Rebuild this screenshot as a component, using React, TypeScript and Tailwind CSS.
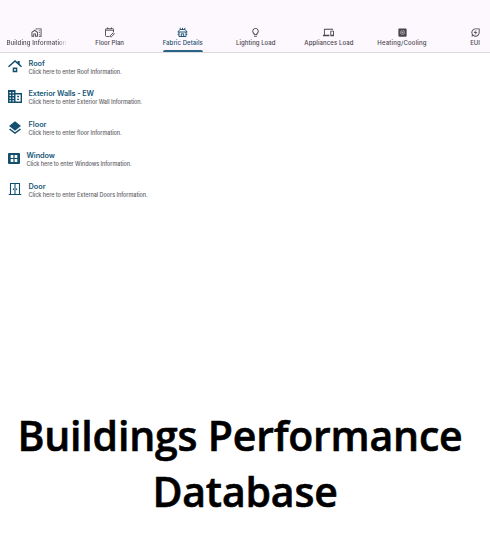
import type { ReactNode } from "react";
import {
  MdOutlineHomeWork,
  MdOutlineLightbulb,
  MdOutlineDevices,
  MdHeatPump,
  MdOutlineEnergySavingsLeaf,
  MdLayers,
} from "react-icons/md";

function FloorPlanIcon() {
  return (
    <svg viewBox="0 0 11 11" className="size-[11px]" fill="none" stroke="currentColor" strokeWidth="0.9">
      <path d="M5.5 9.5H2.5Q1.5 9.5 1.5 8.5V2.5Q1.5 1.7 2.5 1.7H8.5Q9.5 1.7 9.5 2.5V5M1.5 3.2H9.5M3.5 0.5V2M7.5 0.5V2M6.3 9.8V8.6L9.3 5.8L10.3 6.8L7.4 9.8Z" />
    </svg>
  );
}

function FabricIcon() {
  return (
    <svg viewBox="0 0 11 11" className="size-[11px]" fill="none" stroke="currentColor" strokeWidth="0.95">
      <path d="M0.7 5.2L3 2.5H8L10.3 5.2M1 5H10M2 5V9.5H9V5M3.2 0.8V2.5M7.8 0.8V2.5M5.5 0.8V2.5M0.6 7.3H2M9 7.3H10.4M4.3 9.5V6.8H6.7V9.5" />
    </svg>
  );
}

function RoofIcon() {
  return (
    <svg viewBox="0 0 14 13" className="h-[13px] w-3.5" fill="currentColor">
      <path
        fillRule="evenodd"
        d="M7 0L9.6 2.3V0.9H11.7V4.1L14 6.2L13 7.2L7 2L1 7.2L0 6.2ZM4.7 7.5H9.3V12.3H4.7ZM6.2 9V10.8H7.8V9Z"
      />
    </svg>
  );
}

function BuildingIcon() {
  return (
    <svg viewBox="0 0 14 13" className="h-[13px] w-3.5" fill="currentColor">
      <path
        fillRule="evenodd"
        d="M0 0H7.5V3H14V13H0ZM1.5 2V3.2H3V2ZM4.5 2V3.2H6V2ZM1.5 4.8V6H3V4.8ZM4.5 4.8V6H6V4.8ZM1.5 7.5V8.7H3V7.5ZM4.5 7.5V8.7H6V7.5ZM1.5 10.2V11.4H3V10.2ZM4.5 10.2V11.4H6V10.2ZM7.5 4.4V11.6H12.6V4.4Z"
      />
      <path d="M9.2 5.8H11V7.2H9.2ZM9.2 8.7H11V10.1H9.2Z" />
    </svg>
  );
}

function WindowIcon() {
  return (
    <svg viewBox="0 0 12 11" className="h-[11px] w-3" fill="currentColor">
      <path
        fillRule="evenodd"
        d="M1 0H11Q12 0 12 1V10Q12 11 11 11H1Q0 11 0 10V1Q0 0 1 0ZM2.7 2V4.9H5.4V2ZM6.6 2V4.9H9.3V2ZM2.7 6.1V9H5.4V6.1ZM6.6 6.1V9H9.3V6.1Z"
      />
    </svg>
  );
}

function DoorIcon() {
  return (
    <svg viewBox="0 0 14 14" className="size-3.5" fill="none" stroke="currentColor" strokeWidth="1.1">
      <path d="M2.5 12.5V1.5H11.5V12.5M7 1.5V12.5M0.7 12.5H13.3M5.4 6.5V8M8.6 6.5V8" />
    </svg>
  );
}

type Tab = { label: string; icon: ReactNode; text?: string; active?: boolean };

const tabs: Tab[] = [
  {
    label: "Building Information",
    icon: <MdOutlineHomeWork className="size-[11px]" />,
    text: "w-[60px] overflow-hidden tracking-[0.12px] [mask-image:linear-gradient(to_right,black_85%,transparent)]",
  },
  { label: "Floor Plan", icon: <FloorPlanIcon /> },
  { label: "Fabric Details", icon: <FabricIcon />, text: "tracking-[0.08px]", active: true },
  { label: "Lighting Load", icon: <MdOutlineLightbulb className="size-[11px]" />, text: "tracking-[0.04px]" },
  { label: "Appliances Load", icon: <MdOutlineDevices className="size-[11px]" />, text: "tracking-[0.1px]" },
  { label: "Heating/Cooling", icon: <MdHeatPump className="size-[11px]" />, text: "tracking-[0.2px]" },
  { label: "EUI", icon: <MdOutlineEnergySavingsLeaf className="size-[11px]" /> },
];

const rows = [
  {
    title: "Roof",
    detail: "Click here to enter Roof Information.",
    icon: <RoofIcon />,
    slot: "w-[21.5px] pl-[1px]",
    tracking: "",
  },
  {
    title: "Exterior Walls - EW",
    detail: "Click here to enter Exterior Wall Information.",
    icon: <BuildingIcon />,
    slot: "w-[21.5px] pl-[1px]",
    tracking: "tracking-[-0.12px]",
  },
  {
    title: "Floor",
    detail: "Click here to enter floor Information.",
    icon: <MdLayers className="size-4" />,
    slot: "w-[21.5px]",
    tracking: "",
  },
  {
    title: "Window",
    detail: "Click here to enter Windows Information.",
    icon: <WindowIcon />,
    slot: "w-[19.5px] pl-[1px]",
    tracking: "tracking-[-0.1px]",
  },
  {
    title: "Door",
    detail: "Click here to enter External Doors Information.",
    icon: <DoorIcon />,
    slot: "w-[21.5px] pl-[1px]",
    tracking: "",
  },
];

export default function App() {
  return (
    <div className="flex h-[550px] w-[490px] flex-col overflow-hidden bg-white font-['Inter',sans-serif]">
      <nav className="flex h-[53px] shrink-0 border-b border-[#dedae0] bg-[#fdf7fe] pt-[27px]">
        {tabs.map((tab) => (
          <div
            key={tab.label}
            className={`flex w-[73.1px] shrink-0 flex-col items-center ${tab.active ? "text-[#17506e]" : "text-[#49464d]"}`}
          >
            <span className="flex h-[11px] items-center">{tab.icon}</span>
            <span className={`h-[9px] text-[6px] leading-[9px] font-medium whitespace-nowrap ${tab.text ?? ""}`}>
              {tab.label}
            </span>
            {tab.active && <span className="mt-[3px] h-[2px] w-[40px] rounded-t-sm bg-[#266482]" />}
          </div>
        ))}
      </nav>
      <main className="flex flex-col">
        {rows.map((row) => (
          <div key={row.title} className="flex h-[30.8px] items-start pl-[7px]">
            <span className={`flex h-[26px] shrink-0 items-center text-[#134f6d] ${row.slot}`}>{row.icon}</span>
            <div className="flex flex-col pt-[5.5px] whitespace-nowrap">
              <span className={`h-[9px] text-[7.3px] leading-[9px] font-semibold text-[#175777] ${row.tracking}`}>
                {row.title}
              </span>
              <span className="h-2 text-[5.5px] leading-2 font-medium tracking-[-0.05px] text-[#626067]">
                {row.detail}
              </span>
            </div>
          </div>
        ))}
      </main>
      <h1 className="mt-auto mb-[31px] flex flex-col items-center font-['Open_Sans',sans-serif] text-[41px] leading-[56px] font-semibold tracking-[-0.2px] whitespace-nowrap text-black [-webkit-text-stroke:0.6px_black]">
        <span className="pr-2.5">Buildings Performance</span>
        <span>Database</span>
      </h1>
    </div>
  );
}
